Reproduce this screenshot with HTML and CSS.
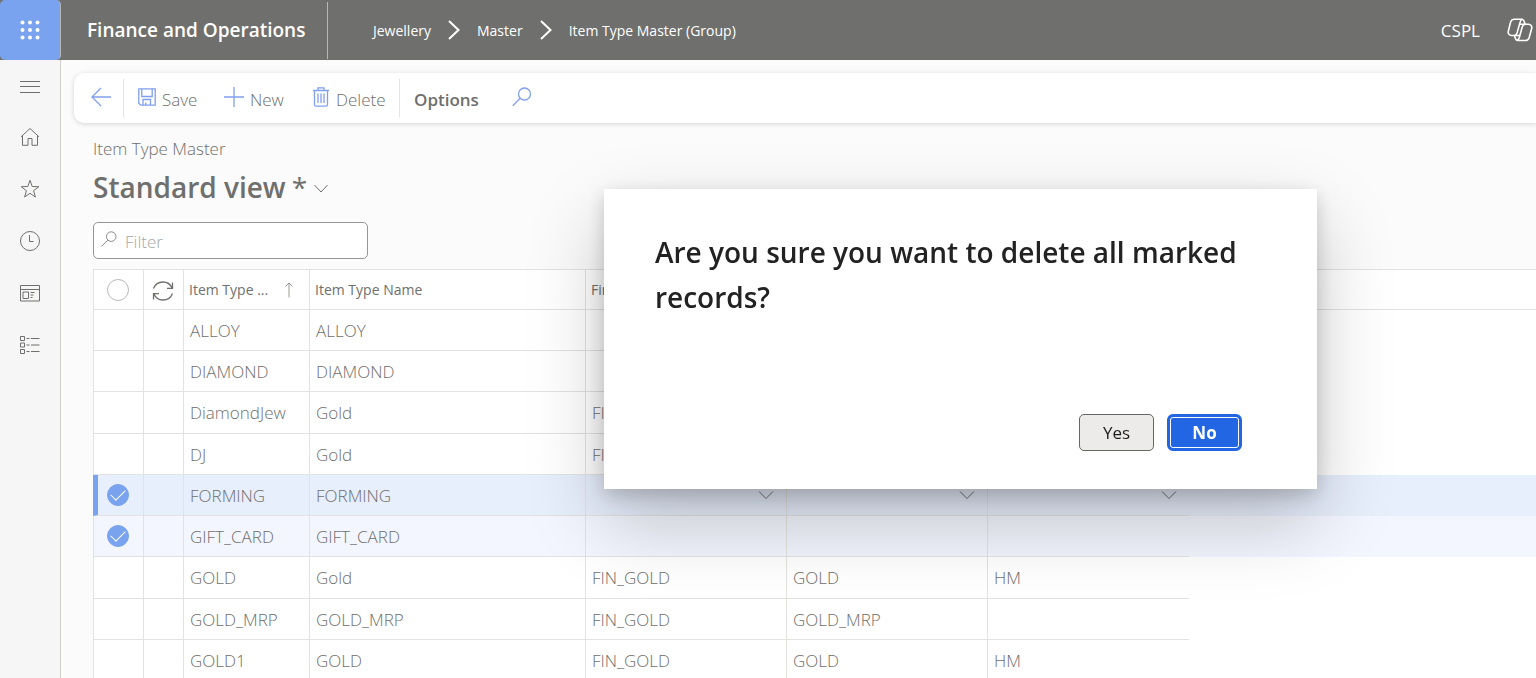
FILE: index.html
```html
<!DOCTYPE html>
<html lang="en">
<head>
<meta charset="utf-8">
<title>Item Type Master - Finance and Operations</title>
<link rel="stylesheet" href="styles.css">
</head>
<body>
<div class="app">
  <header class="topbar">
    <button class="waffle" aria-label="App launcher">
      <svg width="20" height="20" viewBox="0 0 20 20" fill="#fff"><circle cx="2.5" cy="2.5" r="2"/><circle cx="10" cy="2.5" r="2"/><circle cx="17.5" cy="2.5" r="2"/><circle cx="2.5" cy="10" r="2"/><circle cx="10" cy="10" r="2"/><circle cx="17.5" cy="10" r="2"/><circle cx="2.5" cy="17.5" r="2"/><circle cx="10" cy="17.5" r="2"/><circle cx="17.5" cy="17.5" r="2"/></svg>
    </button>
    <a class="brand" href="#">Finance and Operations</a>
    <nav class="crumbs" aria-label="Breadcrumb">
      <a href="#">Jewellery</a>
      <svg width="12" height="20" viewBox="0 0 12 20"><path d="M1 1l9.500 9L1 19"/></svg>
      <a href="#">Master</a>
      <svg width="12" height="20" viewBox="0 0 12 20"><path d="M1 1l9.500 9L1 19"/></svg>
      <a href="#">Item Type Master (Group)</a>
    </nav>
    <button class="company">CSPL</button>
    <button class="copilot" aria-label="Copilot">
      <svg width="26" height="24" viewBox="0 0 26 24" stroke-linejoin="round" stroke-linecap="round"><path d="M6.800 1.200H14.700a2.600 2.600 0 0 1 2.300 1.800l1 3.200h3.500a3.400 3.400 0 0 1 3.200 4.300l-2.600 9.200a4 4 0 0 1-3.800 2.800H11a2.600 2.600 0 0 1-2.500-1.800l-1-3.200H4.500a3.400 3.400 0 0 1-3.200-4.300L3.600 4A4 4 0 0 1 6.800 1.200z"/><path d="M7.500 17.500a3.500 3.500 0 0 0 2.600-2.600l3.100-11a3.600 3.600 0 0 1 1.900-2.500M18 6.200a3.500 3.500 0 0 0-2.700 2.600l-3 10.700a3.800 3.800 0 0 1-2 2.800M12.500 6.200H18M7.500 17.500h5.400"/></svg>
    </button>
  </header>

  <div class="body">
    <nav class="rail" aria-label="Main">
      <button class="expand" aria-label="Expand the navigation pane"><svg width="22" height="22" viewBox="0 0 22 22"><path d="M1 5.500h20M1 10.500h20M1 16.500h20"/></svg></button>
      <button aria-label="Home"><svg width="22" height="22" viewBox="0 0 22 22"><path d="M2 10.800L11 2.500l9 8.300M3.500 9.500v9.800H9v-6.800h4v6.800h5.500V9.500"/></svg></button>
      <button aria-label="Favorites"><svg width="22" height="22" viewBox="0 0 22 22"><path d="M11 2.300l2.200 6.200 6.600.2-5.200 4 1.800 6.300-5.400-3.700-5.400 3.700 1.800-6.300-5.200-4 6.600-.2z"/></svg></button>
      <button aria-label="Recent"><svg width="22" height="22" viewBox="0 0 22 22"><circle cx="11" cy="11" r="9.500"/><path d="M10.500 5v6.500h4"/></svg></button>
      <button aria-label="Workspaces"><svg width="22" height="22" viewBox="0 0 22 22"><path d="M1.500 3.500h19v15.500h-19zM1.500 7.500h19M4 10h5.500v6.500H4zM11.500 10.500h4M11.500 13h3M11.500 15.500h2"/></svg></button>
      <button aria-label="Modules"><svg width="22" height="22" viewBox="0 0 22 22"><path d="M1.500 2.500h4v4h-4zM1.500 9h4v4h-4zM1.500 15.500h4v4h-4zM7.500 4.500h3M12 4.500h8.500M7.500 11h3M12 11h8.500M7.500 17.500h3M12 17.500h8.500"/></svg></button>
    </nav>

    <main class="main">
      <div class="toolbar" role="toolbar">
        <button class="tool back" aria-label="Back"><svg width="22" height="20" viewBox="0 0 22 20"><path d="M21 10H2M11 1L2 10l9 9"/></svg></button>
        <button class="tool save"><svg width="18" height="18" viewBox="0 0 18 18"><path d="M.8.8h16.400v16.400H2.800l-2-2zM3.800 1v7.500h10.400V1M5 17v-5.500h7.500V17M7.800 17v-2.500"/></svg>Save</button>
        <button class="tool add"><svg width="20" height="20" viewBox="0 0 20 20"><path d="M10 0v20M0 10h20"/></svg>New</button>
        <button class="tool remove"><svg width="18" height="20" viewBox="0 0 18 20"><path d="M1 3.500h16M2.500 3.500v14.200q0 1.500 1.500 1.500h10q1.500 0 1.500-1.500V3.500M6 3V.8h6V3M6 6.500v9.500M9 6.500v9.500M12 6.500v9.500"/></svg>Delete</button>
        <button class="tool options">Options</button>
        <button class="tool find" aria-label="Search"><svg width="20" height="20" viewBox="0 0 20 20"><circle cx="12.500" cy="7" r="6"/><path d="M8.200 11.300L.8 18.700"/></svg></button>
      </div>

      <section class="content">
        <h2 class="caption">Item Type Master</h2>
        <h1 class="view"><button>Standard view <span class="star">*</span><svg width="16" height="10" viewBox="0 0 16 10"><path d="M1.500 1L8 8l6.500-7"/></svg></button></h1>
        <label class="filter">
          <svg width="16" height="16" viewBox="0 0 16 16"><circle cx="10.200" cy="5.600" r="4.800"/><path d="M6.800 9L.5 15.300"/></svg>
          <input type="text" placeholder="Filter" aria-label="Filter">
        </label>
        <div class="gridwrap">
          <table class="grid">
            <colgroup><col class="c-mark"><col class="c-refresh"><col class="c-type"><col class="c-name"><col class="c-dim"><col class="c-dim"><col class="c-dim"><col></colgroup>
            <thead>
              <tr>
                <th><input class="mark" type="checkbox" aria-label="Mark all"></th>
                <th><button class="refresh" aria-label="Refresh"><svg width="22" height="22" viewBox="0 0 22 22"><path d="M1.500 8.500C3 4.500 6.500 2 11 2c4 0 7.500 2.300 9 6M20.500 2.500V8.300H15M20.500 13.500C19 17.500 15.500 20 11 20c-4 0-7.500-2.300-9-6M1.500 19.500v-5.800H7"/></svg></button></th>
                <th><div class="sorted">Item Type ...<svg width="8" height="16" viewBox="0 0 8 16"><path d="M4 15.500V1M.5 4.500L4 1l3.500 3.500"/></svg></div></th>
                <th>Item Type Name</th><th>Fin</th><th></th><th></th><th></th>
              </tr>
            </thead>
            <tbody>
              <tr><td></td><td></td><td>ALLOY</td><td>ALLOY</td><td></td><td></td><td></td><td></td></tr>
              <tr><td></td><td></td><td>DIAMOND</td><td>DIAMOND</td><td></td><td></td><td></td><td></td></tr>
              <tr><td></td><td></td><td>DiamondJew</td><td>Gold</td><td>FIN_GOLD</td><td></td><td></td><td></td></tr>
              <tr><td></td><td></td><td>DJ</td><td>Gold</td><td>FIN_GOLD</td><td></td><td></td><td></td></tr>
              <tr class="marked current"><td><input class="mark" type="checkbox" checked aria-label="Mark FORMING"></td><td></td><td>FORMING</td><td>FORMING</td>
                <td><button class="drop" aria-label="Open"><svg width="16" height="10" viewBox="0 0 16 10"><path d="M1 1.500L8 8.500l7-7"/></svg></button></td>
                <td><button class="drop" aria-label="Open"><svg width="16" height="10" viewBox="0 0 16 10"><path d="M1 1.500L8 8.500l7-7"/></svg></button></td>
                <td><button class="drop" aria-label="Open"><svg width="16" height="10" viewBox="0 0 16 10"><path d="M1 1.500L8 8.500l7-7"/></svg></button></td><td></td></tr>
              <tr class="marked"><td><input class="mark" type="checkbox" checked aria-label="Mark GIFT_CARD"></td><td></td><td>GIFT_CARD</td><td>GIFT_CARD</td><td></td><td></td><td></td><td></td></tr>
              <tr><td></td><td></td><td>GOLD</td><td>Gold</td><td>FIN_GOLD</td><td>GOLD</td><td>HM</td><td></td></tr>
              <tr><td></td><td></td><td>GOLD_MRP</td><td>GOLD_MRP</td><td>FIN_GOLD</td><td>GOLD_MRP</td><td></td><td></td></tr>
              <tr><td></td><td></td><td>GOLD1</td><td>GOLD</td><td>FIN_GOLD</td><td>GOLD</td><td>HM</td><td></td></tr>
            </tbody>
          </table>
        </div>
      </section>
    </main>
  </div>
</div>

<div class="overlay">
  <div class="dialog" role="alertdialog" aria-modal="true" aria-labelledby="question">
    <p class="question" id="question">Are you sure you want to delete all marked records?</p>
    <div class="actions">
      <button class="btn">Yes</button>
      <button class="btn primary">No</button>
    </div>
  </div>
</div>
</body>
</html>
```
FILE: styles.css
```css
* { box-sizing: border-box; }
html, body { height: 100%; }
body {
  margin: 0;
  overflow: hidden;
  font-family: "Open Sans", "Noto Sans", sans-serif;
  font-size: 17px;
  color: #6f6f6d;
  background: #fbfbfb;
}
button {
  font: inherit;
  color: inherit;
  background: none;
  border: 0;
  padding: 0;
  cursor: pointer;
}
a { color: inherit; text-decoration: none; }
svg { display: block; flex: none; fill: none; stroke: currentColor; stroke-width: 1; }

.app { height: 100%; display: flex; flex-direction: column; }

.topbar {
  flex: none;
  height: 60px;
  display: flex;
  align-items: center;
  background: #6f6f6d;
  color: #fff;
}
.waffle {
  width: 61px;
  height: 60px;
  display: grid;
  place-items: center;
  background: #79a3ee;
  border-right: 1px solid #b7b7b6;
  border-radius: 5px;
}
.waffle svg { stroke: none; fill: #fff; }
.brand {
  height: 57px;
  width: 267px;
  padding-left: 26px;
  line-height: 57px;
  font-size: 19px;
  font-weight: 600;
  white-space: nowrap;
  border-right: 1px solid #b7b7b6;
}
.crumbs { display: flex; align-items: center; gap: 17px; padding-left: 45px; font-size: 14px; }
.crumbs svg { stroke-width: 2; }
.company { margin-left: auto; font-size: 17px; }
.copilot { margin: 0 3px 0 27px; }
.copilot svg { stroke-width: 1.6; }

.body { flex: 1; min-height: 0; display: flex; }
.rail {
  flex: none;
  width: 61px;
  padding-top: 3px;
  background: #f6f6f6;
  border-right: 1px solid #cfcfce;
}
.rail button { width: 60px; height: 52px; display: grid; place-items: center; }
.rail .expand { height: 48px; }

.main { flex: 1; min-width: 0; display: flex; flex-direction: column; overflow: hidden; }
.toolbar {
  flex: none;
  height: 50px;
  margin: 13px 0 0 13px;
  display: flex;
  align-items: center;
  background: #fff;
  border-radius: 10px 0 0 10px;
  box-shadow: 0 1px 5px rgba(0, 0, 0, 0.16);
  font-weight: 300;
}
.tool { display: flex; align-items: center; gap: 6px; height: 38px; padding-top: 2px; }
.tool svg { color: #809fee; stroke-width: 1.3; margin-bottom: 4px; }
.back { width: 50px; justify-content: center; padding-left: 4px; border-right: 1px solid #e4e4e4; }
.save { width: 100px; padding-left: 14px; }
.add { width: 87px; }
.remove { width: 89px; padding-left: 1px; border-right: 1px solid #e4e4e4; }
.options { padding-left: 14px; font-weight: 600; }
.find { padding-left: 33px; }

.content { flex: 1; min-height: 0; padding: 14px 0 0 32px; display: flex; flex-direction: column; }
.caption { margin: 0; font-size: 17px; line-height: 24px; font-weight: 300; }
.view { margin: 6px 0 0; font-size: 28px; line-height: 40px; font-weight: 600; }
.view button { display: flex; align-items: center; gap: 6px; }
.view svg { margin-top: 4px; }
.star { font-weight: 400; }
.filter {
  width: 275px;
  height: 37px;
  margin-top: 15px;
  padding: 0 7px;
  display: flex;
  align-items: center;
  gap: 8px;
  background: #fff;
  border: 1px solid #959594;
  border-radius: 5px;
  color: #8a8a89;
}
.filter input {
  flex: 1;
  min-width: 0;
  border: 0;
  outline: 0;
  padding: 2px 0 0;
  background: none;
  font: inherit;
  font-weight: 300;
  color: #6f6f6d;
}
.filter input::placeholder { color: #a8a8a8; opacity: 1; }
.filter svg { margin-bottom: 4px; }

.gridwrap { flex: 1; min-height: 0; margin-top: 10px; overflow: hidden; background: #fff; }
.grid { width: 100%; table-layout: fixed; border-collapse: separate; border-spacing: 0; }
.c-mark { width: 51px; }
.c-refresh { width: 40px; }
.c-type { width: 126px; }
.c-name { width: 276px; }
.c-dim { width: 201px; }
.grid th, .grid td {
  height: 41px;
  padding: 0 6px;
  text-align: left;
  white-space: nowrap;
  overflow: hidden;
  border: 0 solid #e2e2e1;
  border-width: 0 1px 1px 0;
}
.grid th { border-top-width: 1px; padding: 0 5px; font-size: 14px; font-weight: 400; }
.grid td { font-size: 17px; font-weight: 300; }
.grid tbody tr:nth-child(4n + 3) td { height: 42px; }
.grid th:first-child, .grid td:first-child { border-left-width: 1px; padding: 0 13px; }
.grid th:nth-last-child(-n + 2), .grid td:nth-last-child(-n + 2) { border-right-width: 0; }
.grid td:last-child { border-bottom-width: 0; }
.grid .marked td { background: #f3f6fe; }
.grid .current td { background: #e7eefc; }
.grid .current td:first-child { border-left: 5px solid #79a3ee; padding-left: 9px; }
.mark {
  appearance: none;
  display: block;
  width: 22px;
  height: 22px;
  margin: 0;
  border: 1px solid #b9b9b8;
  border-radius: 50%;
}
.mark:checked { border-color: #79a3ee; background: #79a3ee; display: grid; place-items: center; }
.mark:checked::before {
  content: "";
  width: 13px;
  height: 7px;
  margin-bottom: 4px;
  border: solid #fff;
  border-width: 0 0 1px 1px;
  transform: rotate(-45deg);
}
.refresh { display: block; padding: 3px 0 0 3px; }
.refresh svg { stroke-width: 1.3; }
.sorted { display: flex; align-items: center; gap: 17px; }
.sorted svg { color: #9a9a99; }
.drop { display: block; margin: 0 6px 0 auto; }

.overlay { position: fixed; inset: 0; display: flex; align-items: center; padding-left: 604px; }
.dialog {
  width: 713px;
  min-height: 300px;
  padding: 41px 75px 38px 51px;
  display: flex;
  flex-direction: column;
  justify-content: space-between;
  background: #fff;
  box-shadow: 0 32px 72px rgba(0, 0, 0, 0.22), 0 6px 18px rgba(0, 0, 0, 0.18);
}
.question { margin: 0; font-size: 28px; line-height: 45px; font-weight: 600; color: #222; }
.actions { display: flex; justify-content: flex-end; gap: 13px; }
.btn {
  width: 75px;
  height: 37px;
  border: 1px solid #666664;
  border-radius: 5px;
  background: #ecebea;
  color: #1c1c1c;
}
.primary {
  border: 3px solid #2266e3;
  border-radius: 6px;
  background: #2266e3;
  color: #fff;
  font-weight: 700;
  box-shadow: inset 0 0 0 1px #fff;
}
```
